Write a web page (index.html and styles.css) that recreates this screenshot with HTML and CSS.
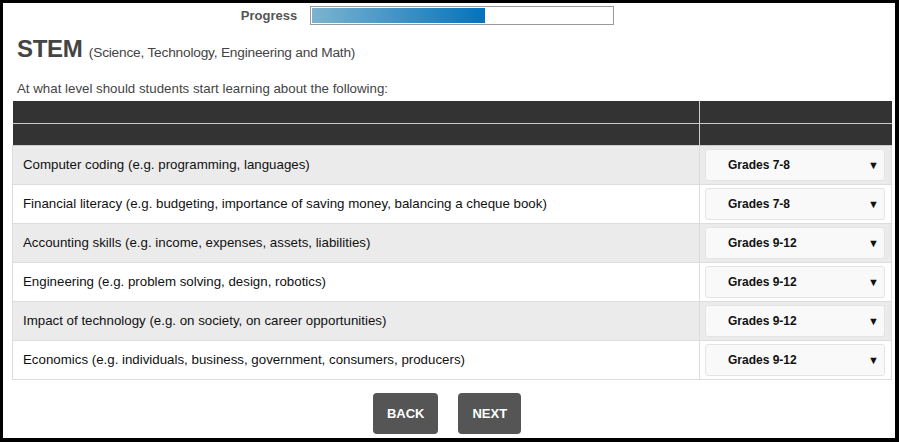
FILE: index.html
```html
<!DOCTYPE html>
<html lang="en">
<head>
    <meta charset="UTF-8">
    <meta name="viewport" content="width=device-width, initial-scale=1.0">
    <title>STEM Survey</title>
    <link rel="stylesheet" href="styles.css">
</head>
<body>
    <div class="frame">
        <div class="progress-row">
            <span class="progress-label">Progress</span>
            <div class="progress-bar"><div class="progress-fill" style="width: 57.5%;"></div></div>
        </div>

        <h1 class="title">STEM <small>(Science, Technology, Engineering and Math)</small></h1>
        <p class="question">At what level should students start learning about the following:</p>

        <table class="grid">
            <thead>
                <tr><th></th><th class="col-answer"></th></tr>
                <tr><th></th><th class="col-answer"></th></tr>
            </thead>
            <tbody>
                <tr>
                    <td>Computer coding (e.g. programming, languages)</td>
                    <td class="col-answer"><div class="select"><span>Grades 7-8</span><span class="arrow">&#9660;</span></div></td>
                </tr>
                <tr>
                    <td>Financial literacy (e.g. budgeting, importance of saving money, balancing a cheque book)</td>
                    <td class="col-answer"><div class="select"><span>Grades 7-8</span><span class="arrow">&#9660;</span></div></td>
                </tr>
                <tr>
                    <td>Accounting skills (e.g. income, expenses, assets, liabilities)</td>
                    <td class="col-answer"><div class="select"><span>Grades 9-12</span><span class="arrow">&#9660;</span></div></td>
                </tr>
                <tr>
                    <td>Engineering (e.g. problem solving, design, robotics)</td>
                    <td class="col-answer"><div class="select"><span>Grades 9-12</span><span class="arrow">&#9660;</span></div></td>
                </tr>
                <tr>
                    <td>Impact of technology (e.g. on society, on career opportunities)</td>
                    <td class="col-answer"><div class="select"><span>Grades 9-12</span><span class="arrow">&#9660;</span></div></td>
                </tr>
                <tr>
                    <td>Economics (e.g. individuals, business, government, consumers, producers)</td>
                    <td class="col-answer"><div class="select"><span>Grades 9-12</span><span class="arrow">&#9660;</span></div></td>
                </tr>
            </tbody>
        </table>

        <div class="nav">
            <button class="nav-btn">BACK</button>
            <button class="nav-btn">NEXT</button>
        </div>
    </div>
</body>
</html>
```

FILE: styles.css
```css
* {
    box-sizing: border-box;
}
body {
    margin: 0;
    font-family: "Liberation Sans", Arial, sans-serif;
    background-color: #000;
}
.frame {
    height: 442px;
    border-style: solid;
    border-color: #000;
    border-width: 3px 4px 4px 3px;
    background-color: #fff;
    padding: 3px 3px 0 9px;
}
.progress-row {
    display: flex;
    align-items: center;
    justify-content: center;
    gap: 13px;
    padding-right: 49px;
}
.progress-label {
    font-size: 13px;
    font-weight: bold;
    color: #555;
}
.progress-bar {
    width: 304px;
    height: 19px;
    border: 1px solid #999;
    padding: 1px;
}
.progress-fill {
    height: 100%;
    background: linear-gradient(to right, #7cb3cf, #0473bd);
}
.title {
    margin: 10px 0 0 5px;
    font-size: 24px;
    font-weight: bold;
    color: #444;
    letter-spacing: -0.3px;
}
.title small {
    font-size: 13.7px;
    font-weight: normal;
    letter-spacing: -0.2px;
}
.question {
    margin: 18px 0 0 5px;
    font-size: 13.3px;
    color: #444;
}
.grid {
    width: 880px;
    margin-top: 5px;
    border-collapse: collapse;
    font-size: 13.3px;
    color: #111;
}
.grid th {
    background-color: #333;
    height: 22px;
    padding: 0;
    border-left: 1px solid #ccc;
    border-bottom: 1px solid #ccc;
}
.grid th:first-child {
    border-left: none;
}
.grid td {
    height: 39px;
    padding: 0 10px;
    border: 1px solid #ddd;
}
.grid tbody tr:nth-child(odd) {
    background-color: #ebebeb;
}
.grid .col-answer {
    width: 192px;
    padding: 0 6px 0 5px;
}
.select {
    display: flex;
    align-items: center;
    justify-content: space-between;
    height: 32px;
    padding: 0 5px 0 22px;
    background-color: #f9f9f9;
    border: 1px solid #e4e4e4;
    border-radius: 3px;
    font-size: 12px;
    font-weight: bold;
    color: #111;
}
.arrow {
    font-size: 11px;
}
.nav {
    display: flex;
    justify-content: center;
    gap: 20px;
    margin-top: 13px;
    padding-right: 10px;
}
.nav-btn {
    height: 41px;
    padding: 0 14px;
    background-color: #555;
    color: #fff;
    border: none;
    border-radius: 4px;
    font-family: "Liberation Sans", Arial, sans-serif;
    font-size: 13px;
    font-weight: bold;
}
```
